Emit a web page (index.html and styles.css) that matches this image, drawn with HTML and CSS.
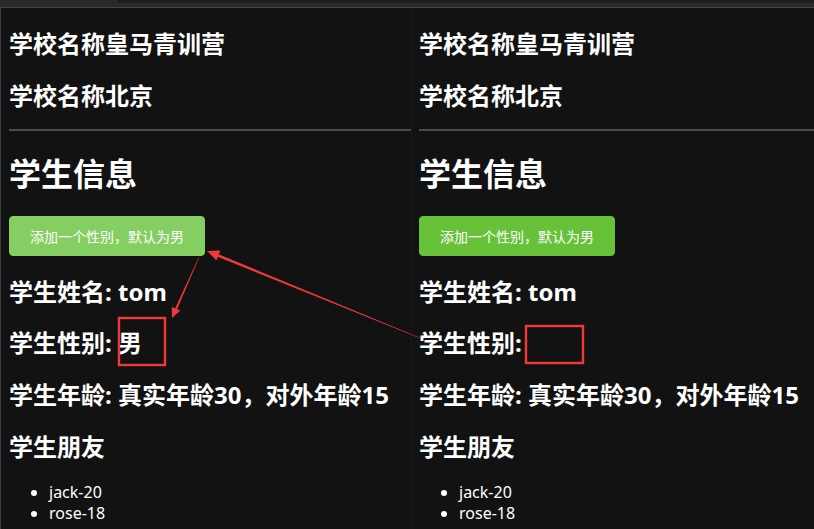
FILE: index.html
```html
<!DOCTYPE html>
<html lang="zh-CN">
<head>
<meta charset="utf-8">
<title>学生信息</title>
<link rel="stylesheet" href="styles.css">
</head>
<body>
<div class="topbar"><div class="topbar-strip"></div></div>
<div class="split">
  <section class="pane pane-left">
    <h2>学校名称皇马青训营</h2>
    <h2>学校名称北京</h2>
    <hr>
    <h1>学生信息</h1>
    <div><button class="btn btn-hover">添加一个性别，默认为男</button></div>
    <h2>学生姓名: tom</h2>
    <h2>学生性别: 男</h2>
    <h2>学生年龄: 真实年龄30，对外年龄15</h2>
    <h2>学生朋友</h2>
    <ul>
      <li>jack-20</li>
      <li>rose-18</li>
    </ul>
  </section>
  <div class="divider"></div>
  <section class="pane pane-right">
    <h2>学校名称皇马青训营</h2>
    <h2>学校名称北京</h2>
    <hr>
    <h1>学生信息</h1>
    <div><button class="btn">添加一个性别，默认为男</button></div>
    <h2>学生姓名: tom</h2>
    <h2>学生性别: </h2>
    <h2>学生年龄: 真实年龄30，对外年龄15</h2>
    <h2>学生朋友</h2>
    <ul>
      <li>jack-20</li>
      <li>rose-18</li>
    </ul>
  </section>
</div>
<svg class="annot" width="814" height="529" viewBox="0 0 814 529">
  <rect x="119" y="318" width="46" height="47" fill="none" stroke="#f2383a" stroke-width="2.4"/>
  <rect x="526" y="326" width="57" height="37" fill="none" stroke="#f2383a" stroke-width="2.4"/>
  <polygon fill="#f2383a" points="420,338.3 420,337.7 218.6,254.3 217.6,256.7"/>
  <polygon fill="#f2383a" points="207,251 220.4,250.6 216.4,260.4"/>
  <polygon fill="#f2383a" points="199.2,257.5 198.8,257.3 175.1,308.5 177.1,309.3"/>
  <polygon fill="#f2383a" points="172,318 180.4,310.6 171.8,307"/>
</svg>
</body>
</html>
```

FILE: styles.css
```css
html, body {
  margin: 0;
  padding: 0;
  background: #121212;
  width: 814px;
  height: 529px;
  overflow: hidden;
}

body {
  font-family: "Noto Sans", "Noto Sans CJK SC", sans-serif;
  color: #ffffff;
  line-height: 1.32;
  position: relative;
}

.topbar {
  height: 7px;
  background: #2a2a2a;
  border-bottom: 1px solid #444444;
  position: relative;
}

.topbar-strip {
  margin-left: 117px;
  height: 3px;
  background: #1d1d1d;
  border-bottom-left-radius: 4px;
}

.split {
  display: flex;
  height: 521px;
}

.pane {
  overflow: hidden;
  background: #121212;
}

.pane-left {
  width: 402px;
  flex: none;
  border-left: 1px solid #3a3a3a;
  padding-left: 8px;
}

.divider {
  width: 1px;
  flex: none;
  background: #171717;
}

.pane-right {
  flex: 1;
  padding-left: 7px;
}

h1 {
  font-size: 32px;
  font-weight: 700;
  margin: 22px 0 20px;
  line-height: 1.32;
}

h2 {
  font-size: 24px;
  font-weight: 700;
  margin: 20px 0;
  line-height: 1.32;
  white-space: nowrap;
}

hr {
  border: 0;
  height: 2px;
  background: #4b4b4b;
  margin: -2px 0 8px;
}

.btn {
  display: inline-block;
  box-sizing: border-box;
  height: 40px;
  padding: 0 20px;
  border: 1px solid #67c23a;
  border-radius: 4px;
  background: #67c23a;
  color: #ffffff;
  font-family: "Noto Sans CJK SC", sans-serif;
  font-size: 14px;
  line-height: 38px;
  margin: 0;
  cursor: pointer;
}

.btn-hover {
  background: #85ce61;
  border-color: #85ce61;
}

ul {
  margin: 0;
  padding-left: 40px;
  font-size: 16px;
}

li {
  line-height: 21px;
}

.annot {
  position: absolute;
  left: 0;
  top: 0;
  pointer-events: none;
}
```
